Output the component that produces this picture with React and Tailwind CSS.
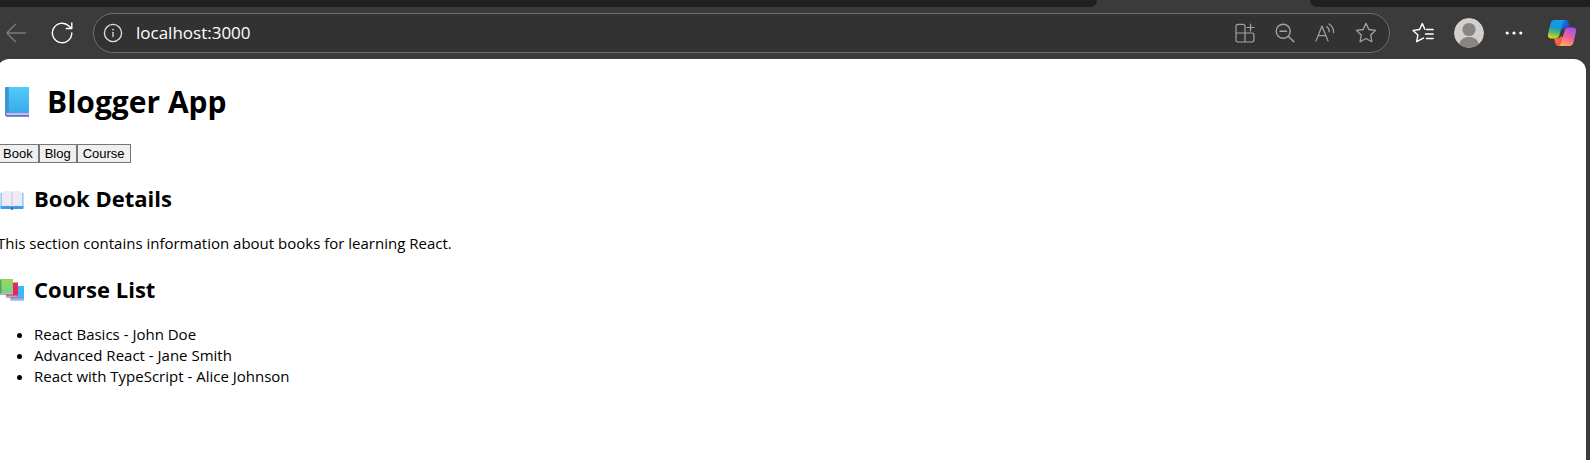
import React, { useState } from "react";

const line = {
  fill: "none",
  stroke: "currentColor",
  strokeLinecap: "round",
  strokeLinejoin: "round",
};

function BackIcon() {
  return (
    <svg className="h-5 w-5" viewBox="0 0 20 20" strokeWidth="1.3" {...line} aria-hidden="true">
      <path d="M19.5 10H.8M9.5 1.2.8 10l8.7 8.8" />
    </svg>
  );
}

function ReloadIcon() {
  return (
    <svg className="h-[22px] w-[22px]" viewBox="0 0 22 22" strokeWidth="1.4" {...line} aria-hidden="true">
      <path d="M20.8 11a9.7 9.7 0 1 1-2.900-6.900L20.500 6.500M20.800 1v5.500h-5.500" />
    </svg>
  );
}

function InfoIcon() {
  return (
    <svg className="h-5 w-5" viewBox="0 0 20 20" strokeWidth="1.3" {...line} aria-hidden="true">
      <circle cx="10" cy="10" r="8.6" />
      <path d="M10 9.3v4.2" />
      <circle cx="10" cy="6.6" r=".9" fill="currentColor" stroke="none" />
    </svg>
  );
}

function AppsIcon() {
  return (
    <svg className="h-5 w-5" viewBox="0 0 20 20" strokeWidth="1.2" {...line} aria-hidden="true">
      <path d="M10 10H1V3.2C1 2 1.7 1.3 2.9 1.3h5.2c1.2 0 1.9.7 1.900 1.900V19H2.900C1.700 19 1 18.300 1 17.100V10M10 10h7c1.200 0 1.900.7 1.900 1.900v5.200c0 1.200-.7 1.900-1.900 1.900h-7M15.500 1v7M12 4.500h7" />
    </svg>
  );
}

function ZoomOutIcon() {
  return (
    <svg className="h-5 w-5" viewBox="0 0 20 20" strokeWidth="1.4" {...line} aria-hidden="true">
      <circle cx="8.200" cy="8.200" r="7" />
      <path d="M5 8.200h6.500M13.300 13.300l5.500 5.500" />
    </svg>
  );
}

function ReadAloudIcon() {
  return (
    <svg className="h-5 w-5" viewBox="0 0 20 20" strokeWidth="1.2" {...line} aria-hidden="true">
      <path d="M1 18 7 3l6 15M3.200 12.600h7.600M11.600 3.600a6 6 0 0 1 2.600 5.200M14 .9a9.300 9.300 0 0 1 4.500 8.700" />
    </svg>
  );
}

function StarIcon() {
  return (
    <svg className="h-[22px] w-[22px]" viewBox="0 0 22 22" strokeWidth="1.3" {...line} aria-hidden="true">
      <path d="m11 1.400 2.900 6.100 6.700.9-4.900 4.600 1.200 6.700L11 16.500l-5.900 3.200 1.200-6.700-4.900-4.600 6.700-.9Z" />
    </svg>
  );
}

function FavoritesIcon() {
  return (
    <svg className="h-[22px] w-[22px]" viewBox="0 0 22 22" strokeWidth="1.400" {...line} aria-hidden="true">
      <path d="M14.500 7.500h6.700M13.500 12h7.700M14.500 16.500h6.700M12.800 7.300l-2.500-5.800-2.700 6-6.500.9 4.800 4.600-1.200 6.700 5.600-3.100 1.200-.5" />
    </svg>
  );
}

function Avatar() {
  return (
    <svg className="h-[30px] w-[30px] rounded-full" viewBox="0 0 30 30" aria-hidden="true">
      <circle cx="15" cy="15" r="15" fill="#d2d0ce" />
      <circle cx="15" cy="11.500" r="6.600" fill="#8a8581" />
      <path d="M5 26.200C6.500 21.500 10 19 15 19s8.500 2.500 10 7.200A15 15 0 0 1 15 30 15 15 0 0 1 5 26.200Z" fill="#8a8581" />
    </svg>
  );
}

function MoreIcon() {
  return (
    <svg className="h-5 w-5" viewBox="0 0 20 20" fill="currentColor" aria-hidden="true">
      <circle cx="3.200" cy="10" r="1.600" />
      <circle cx="10" cy="10" r="1.600" />
      <circle cx="16.800" cy="10" r="1.600" />
    </svg>
  );
}

function CopilotIcon() {
  return (
    <svg className="h-7 w-[30px]" viewBox="1 0 30 28" aria-hidden="true">
      <defs>
        <linearGradient id="cpLeft" x1=".55" y1="0" x2=".35" y2="1">
          <stop offset="0" stopColor="#159cf0" />
          <stop offset=".4" stopColor="#1496d8" />
          <stop offset=".7" stopColor="#5cb866" />
          <stop offset="1" stopColor="#f5d015" />
        </linearGradient>
        <linearGradient id="cpRight" x1=".7" y1="0" x2=".3" y2="1">
          <stop offset="0" stopColor="#a94df0" />
          <stop offset=".5" stopColor="#f0609a" />
          <stop offset="1" stopColor="#ffab58" />
        </linearGradient>
        <linearGradient id="cpTop" x1="0" y1="0" x2="1" y2="1">
          <stop offset="0" stopColor="#1583e8" />
          <stop offset="1" stopColor="#1640c4" />
        </linearGradient>
        <linearGradient id="cpBottom" x1="0" y1="0" x2="1" y2="1">
          <stop offset="0" stopColor="#f8853c" />
          <stop offset="1" stopColor="#ee4048" />
        </linearGradient>
      </defs>
      <path d="M13 1h5.500c1.500 0 2.400.8 2.900 2.300l1.500 5.200h-3c-2.300 0-3.300 1-3.900 2.800L13.500 9Z" fill="url(#cpTop)" />
      <path d="M17 27h-5.500c-1.500 0-2.400-.8-2.900-2.300L7.100 19.500h3c2.300 0 3.300-1 3.900-2.800l2.500 2.300Z" fill="url(#cpBottom)" />
      <path d="M7.800 1h10.400c-1.300.6-1.900 1.800-2.400 3.400L12.300 16.500c-.6 2-1.800 3-3.800 3H4.200C1.600 19.500.3 17.600 1 15L3.400 5C4 2.300 5.400 1 7.800 1Z" fill="url(#cpLeft)" />
      <path d="M22.200 27H11.800c1.300-.6 1.900-1.800 2.400-3.400L17.700 11.500c.6-2 1.800-3 3.800-3h4.300c2.600 0 3.900 1.900 3.200 4.500L26.600 23c-.6 2.700-2 4-4.400 4Z" fill="url(#cpRight)" />
    </svg>
  );
}

function BlueBook() {
  return (
    <svg className="h-8 w-6 shrink-0" viewBox="0 0 24 32" aria-hidden="true">
      <defs>
        <linearGradient id="bookCover" x1="0" y1="0" x2="0" y2="1">
          <stop offset="0" stopColor="#51cdf5" />
          <stop offset="1" stopColor="#3ba8ee" />
        </linearGradient>
      </defs>
      <path d="M0 2.500C0 1.500.5 1 1.500 1H24v29H1.500C.5 30 0 29.500 0 28.500Z" fill="#3f7fd0" />
      <path d="M1 27h23v2.300H1.500Z" fill="#d9b4e4" />
      <path d="M3.500 1H24v26H3.500Z" fill="url(#bookCover)" />
      <path d="M0 2.500C0 1.500.5 1 1.500 1h2v26H0Z" fill="#3c98cf" />
      <path d="M1 29.500h23v1.200H1.500Z" fill="#4c66c0" />
    </svg>
  );
}

function OpenBook() {
  return (
    <svg className="h-6 w-6 shrink-0" viewBox="0 0 24 24" aria-hidden="true">
      <path d="M1 6.500h22l.6 1V21H.4V7.500Z" fill="#8fcdf3" />
      <path d="M.4 20h23.200v2c0 .5-.4.900-.9.900H14l-2 1-2-1H1.300c-.5 0-.9-.4-.9-.9Z" fill="#3f9de8" />
      <path d="M2 5.500c3.500-.8 7-.8 10 0 3-.8 6.500-.8 10 0v14.700c-3.500-.7-7-.7-10 0-3-.7-6.500-.7-10 0Z" fill="#f0e9f6" />
      <path d="M12 5.500v14.500" stroke="#d5cbe6" strokeWidth="1.200" />
      <path d="M11 21.300h2v2h-2Z" fill="#1d5cc0" />
    </svg>
  );
}

function BookStack() {
  return (
    <svg className="h-6 w-6 shrink-0" viewBox="0 -2 24 24" aria-hidden="true">
      <defs>
        <linearGradient id="greenCover" x1="0" y1="0" x2="0" y2="1">
          <stop offset="0" stopColor="#9bdc55" />
          <stop offset="1" stopColor="#72cf8c" />
        </linearGradient>
      </defs>
      <path d="M11 7h13v14.500H10.500V18Z" fill="#41b5f2" />
      <path d="M10.500 19.600H24v1.600H10.800Z" fill="#b7a6e2" />
      <path d="M6 3.500h12v15H6Z" fill="#e2295f" />
      <path d="M5.500 16.500h12v1.800H6Z" fill="#c7a2cf" />
      <path d="M0 1.300C0 .7.400.3 1 .3h12v15.400H1c-.6 0-1-.4-1-1Z" fill="#5aa45a" />
      <path d="M1.500.3H13V14H1.500Z" fill="url(#greenCover)" />
      <path d="M.8 14H13v1.200H1Z" fill="#c9b4dc" />
    </svg>
  );
}

function BrowserBar() {
  return (
    <header className="bg-[#3b3b3b]">
      <div className="flex h-[7px]">
        <div className="flex-1 rounded-br-lg bg-[#202020]" />
        <div className="w-[213px]" />
        <div className="w-[280px] rounded-bl-lg bg-[#202020]" />
      </div>
      <div className="flex h-[52px] items-center pr-3 pl-[6px]">
        <button aria-label="Back" className="text-[#7c7c7c]"><BackIcon /></button>
        <button aria-label="Refresh" className="ml-[25px] text-white"><ReloadIcon /></button>
        <div className="ml-5 flex h-10 min-w-0 flex-1 items-center rounded-full border border-[#6f6f6f] bg-[#323232] pr-3 pl-[9px]">
          <button aria-label="View site information" className="text-[#dedede]"><InfoIcon /></button>
          <input
            aria-label="Address"
            defaultValue="localhost:3000"
            className="ml-[13px] min-w-0 flex-1 bg-transparent font-['Open_Sans','Noto_Sans',sans-serif] text-[17px] text-white outline-none"
          />
          <div className="flex items-center gap-5 text-[#a3a3a3]">
            <button aria-label="App available"><AppsIcon /></button>
            <button aria-label="Zoom out"><ZoomOutIcon /></button>
            <button aria-label="Read aloud"><ReadAloudIcon /></button>
            <button aria-label="Add to favorites"><StarIcon /></button>
          </div>
        </div>
        <div className="ml-[22px] flex items-center gap-5 text-white">
          <button aria-label="Favorites"><FavoritesIcon /></button>
          <button aria-label="Profile"><Avatar /></button>
          <button aria-label="Settings and more"><MoreIcon /></button>
          <button aria-label="Copilot" className="ml-1"><CopilotIcon /></button>
        </div>
      </div>
    </header>
  );
}

const courses = [
  { name: "React Basics", author: "John Doe" },
  { name: "Advanced React", author: "Jane Smith" },
  { name: "React with TypeScript", author: "Alice Johnson" },
];

function SectionTitle({ icon, children }) {
  return (
    <h2 className="flex items-center gap-[10px] pl-[3px] text-[22px] leading-[30px] font-bold">
      {icon}
      {children}
    </h2>
  );
}

export default function App() {
  const [, setActive] = useState("Book");
  return (
    <div className="flex min-h-screen flex-col bg-[#3b3b3b]">
      <BrowserBar />
      <div className="flex flex-1 pr-1">
        <main className="-ml-[3px] flex-1 rounded-t-xl bg-white pt-[22px] font-['Open_Sans','Noto_Sans',sans-serif] text-black">
          <h1 className="flex items-center gap-[18px] pl-2 text-[30px] leading-[42px] font-bold">
            <BlueBook />
            Blogger App
          </h1>
          <div className="mt-[21px] flex">
            {["Book", "Blog", "Course"].map((label) => (
              <button
                key={label}
                onClick={() => setActive(label)}
                className="border border-[#767676] bg-[#efefef] px-[5px] font-['Liberation_Sans',sans-serif] text-[13px] leading-[17px]"
              >
                {label}
              </button>
            ))}
          </div>
          <div className="mt-5">
            <SectionTitle icon={<OpenBook />}>Book Details</SectionTitle>
            <p className="mt-5 text-[15px] leading-[21px]">
              This section contains information about books for learning React.
            </p>
          </div>
          <div className="mt-5">
            <SectionTitle icon={<BookStack />}>Course List</SectionTitle>
            <ul className="mt-5 list-disc pl-[37px] text-[15px] leading-[21px]">
              {courses.map((course) => (
                <li key={course.name}>
                  {course.name} - {course.author}
                </li>
              ))}
            </ul>
          </div>
        </main>
      </div>
    </div>
  );
}
